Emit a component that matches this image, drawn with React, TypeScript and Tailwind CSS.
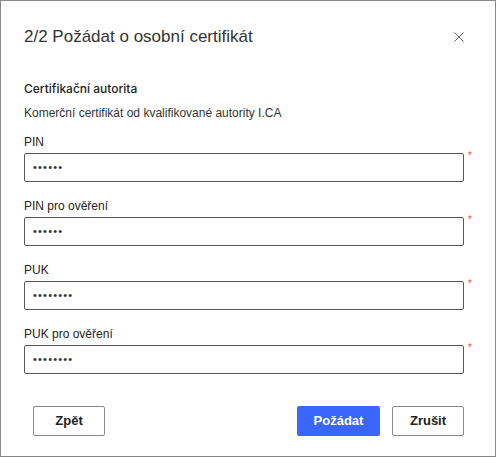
import React from "react";

const font = { fontFamily: "'Liberation Sans', Arial, sans-serif" };
const inter = { fontFamily: "Inter, 'Liberation Sans', sans-serif" };

function Field({ label, dots }: { label: React.ReactNode; dots: number }) {
  return (
    <div className="flex flex-col">
      <div className="h-[16px] leading-[16px] text-[12px] text-[#222] mb-[3px]">{label}</div>
      <div className="flex items-start">
        <div className="w-[440px] h-[29px] border border-[#5a5a5a] rounded-[2px] bg-white flex items-center pl-[8px]">
          <span className="text-[11px] tracking-[1.2px] text-[#333] leading-none">{"•".repeat(dots)}</span>
        </div>
        <span className="ml-[4px] mt-[-2px] text-[10px] leading-none text-[#d9534f]">*</span>
      </div>
    </div>
  );
}

export default function App() {
  return (
    <div style={font} className="w-[496px] h-[457px] border border-[#8a8a8a] bg-white relative">
      <div className="pl-[23px] pr-[23px] pt-[24px]">
        <div className="flex items-center justify-between h-[24px]">
          <div className="text-[17px] leading-[24px] text-[#333]">2/2 Požádat o osobní certifikát</div>
          <svg width="10" height="10" viewBox="0 0 10 10" className="mr-[8px]">
            <path d="M0.5 0.5 L9.5 9.5 M9.5 0.5 L0.5 9.5" stroke="#666" strokeWidth="1" />
          </svg>
        </div>
        <div style={inter} className="mt-[32px] h-[16px] leading-[16px] text-[12px] font-medium text-[#222]">Certifikační autorita</div>
        <div className="mt-[8px] h-[16px] leading-[16px] text-[12px] text-[#333]">Komerční certifikát od kvalifikované autority I.CA</div>
        <div className="mt-[13px] flex flex-col gap-[16px]">
          <Field label="PIN" dots={6} />
          <Field label={<>PIN pro ověření</>} dots={6} />
          <Field label="PUK" dots={8} />
          <Field label={<>PUK pro ověření</>} dots={8} />
        </div>
        <div className="mt-[32px] flex items-center pl-[9px] pr-[8px]">
          <button className="w-[72px] h-[30px] border border-[#8a8a8a] rounded-[2px] bg-white text-[13px] font-bold text-[#222]">Zpět</button>
          <div className="flex-1" />
          <button className="w-[83px] h-[30px] rounded-[2px] bg-[#3a66ff] text-[13px] font-bold text-white">Požádat</button>
          <button className="ml-[12px] w-[72px] h-[30px] border border-[#8a8a8a] rounded-[2px] bg-white text-[13px] font-bold text-[#222]">Zrušit</button>
        </div>
      </div>
    </div>
  );
}
